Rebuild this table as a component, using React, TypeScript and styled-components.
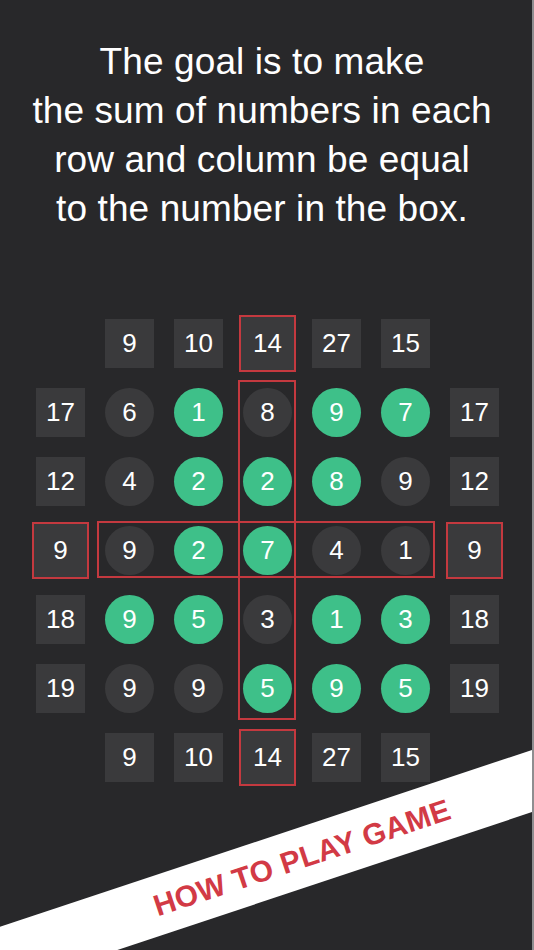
import React from "react";
import styled, { createGlobalStyle } from "styled-components";

const GlobalStyle = createGlobalStyle`
  html, body { margin: 0; padding: 0; background: #28282a; }
  body { overflow: hidden; }
  * { box-sizing: border-box; }
`;

const Page = styled.div`
  position: relative;
  width: 534px;
  height: 950px;
  overflow: hidden;
  background: #28282a;
  border-right: 2px solid #8e8e90;
  padding-top: 37px;
  font-family: "Liberation Sans", Arial, sans-serif;
  color: #ffffff;
`;

const Title = styled.h1`
  margin: 0;
  padding-right: 8px;
  font-weight: 400;
  font-size: 37px;
  line-height: 49px;
  text-align: center;
  letter-spacing: 0.1px;
`;

const Board = styled.div`
  margin: 86px 0 0 36px;
  display: grid;
  grid-template-columns: repeat(7, 49px);
  grid-template-rows: repeat(7, 49px);
  gap: 20px;
`;

const Cell = styled.div<{ $row: number; $col: number }>`
  grid-row: ${(p) => p.$row};
  grid-column: ${(p) => p.$col};
  display: flex;
  align-items: center;
  justify-content: center;
  font-size: 26px;
  color: #ffffff;
  position: relative;
  z-index: 1;
`;

const Box = styled(Cell)<{ $marked?: boolean }>`
  background: #3a3a3c;
  ${(p) =>
    p.$marked
      ? `margin: -4px; border: 2px solid #c4393f;`
      : ``}
`;

const Ball = styled(Cell)<{ $on?: boolean }>`
  border-radius: 50%;
  background: ${(p) => (p.$on ? "#3ec089" : "#3a3a3c")};
`;

const Highlight = styled.div<{ $rows: string; $cols: string; $m: string }>`
  grid-row: ${(p) => p.$rows};
  grid-column: ${(p) => p.$cols};
  margin: ${(p) => p.$m};
  border: 2px solid #c4393f;
  position: relative;
  z-index: 0;
`;

const Banner = styled.div`
  position: absolute;
  left: -98px;
  top: 828px;
  width: 800px;
  height: 59px;
  background: #ffffff;
  transform: rotate(-18.4deg);
  transform-origin: 50% 50%;
  display: flex;
  align-items: center;
  justify-content: center;
  z-index: 5;
`;

const BannerText = styled.span`
  font-family: "Liberation Sans", Arial, sans-serif;
  font-weight: 700;
  font-size: 30px;
  letter-spacing: 0.3px;
  color: #d23a45;
  white-space: nowrap;
`;

type Item = null | { t: "box"; v: number; m?: boolean } | { t: "ball"; v: number; on: boolean };

const sumRow = (vals: (number | null)[], marked: number[] = []): Item[] =>
  vals.map((v, i) => (v === null ? null : { t: "box", v, m: marked.includes(i) }));

const b = (v: number, on: boolean): Item => ({ t: "ball", v, on });
const s = (v: number, m = false): Item => ({ t: "box", v, m });

const grid: Item[][] = [
  sumRow([null, 9, 10, 14, 27, 15, null], [3]),
  [s(17), b(6, false), b(1, true), b(8, false), b(9, true), b(7, true), s(17)],
  [s(12), b(4, false), b(2, true), b(2, true), b(8, true), b(9, false), s(12)],
  [s(9, true), b(9, false), b(2, true), b(7, true), b(4, false), b(1, false), s(9, true)],
  [s(18), b(9, true), b(5, true), b(3, false), b(1, true), b(3, true), s(18)],
  [s(19), b(9, false), b(9, false), b(5, true), b(9, true), b(5, true), s(19)],
  sumRow([null, 9, 10, 14, 27, 15, null], [3]),
];

export default function App() {
  return (
    <>
      <GlobalStyle />
      <Page>
        <Title>
          The goal is to make
          <br />
          the sum of numbers in each
          <br />
          row and column be equal
          <br />
          to the number in the box.
        </Title>
        <Board>
          <Highlight $rows="2 / 7" $cols="4" $m="-8px -4px -7px -5px" />
          <Highlight $rows="4" $cols="2 / 7" $m="-5px -5px -3px -8px" />
          {grid.map((row, r) =>
            row.map((it, c) => {
              if (!it) return null;
              const key = `${r}-${c}`;
              if (it.t === "box")
                return (
                  <Box key={key} $row={r + 1} $col={c + 1} $marked={it.m}>
                    {it.v}
                  </Box>
                );
              return (
                <Ball key={key} $row={r + 1} $col={c + 1} $on={it.on}>
                  {it.v}
                </Ball>
              );
            })
          )}
        </Board>
        <Banner>
          <BannerText>HOW TO PLAY GAME</BannerText>
        </Banner>
      </Page>
    </>
  );
}
